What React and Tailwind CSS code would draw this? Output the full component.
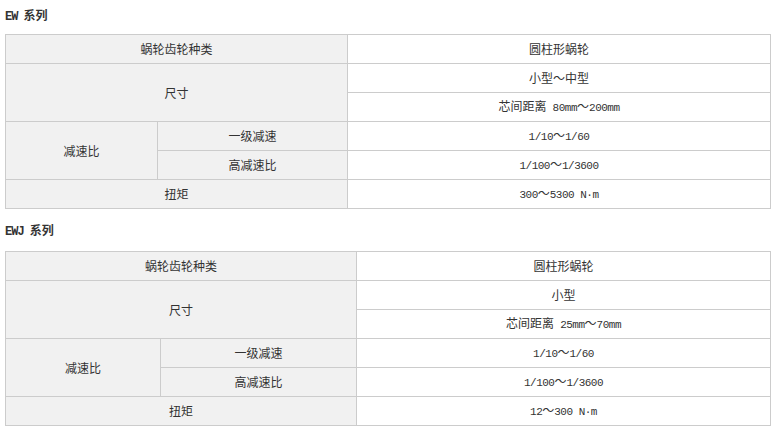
const series = [
	{
		title: 'EW 系列',
		cols: [152, 190, 423],
		size: ['小型～中型', '芯间距离 80mm～200mm'],
		torque: '300～5300 N·m',
		gap: 'mt-[5px]',
	},
	{
		title: 'EWJ 系列',
		cols: [155, 196, 414],
		size: ['小型', '芯间距离 25mm～70mm'],
		torque: '12～300 N·m',
		gap: 'mt-[7px]',
	},
];

// half-width runs are set in a mono face, like the original page's SimSun
const Txt = ({ children, big }) =>
	children.split(/([\x20-\x7e·]+)/).map((part, i) =>
		/^[\x20-\x7e·]+$/.test(part) ? (
			<span
				key={i}
				className={big ? 'text-[12px] tracking-[-1px] whitespace-pre' : 'text-[11px] tracking-[-0.5px] whitespace-pre'}
				style={{ fontFamily: '"Liberation Mono", monospace' }}
			>
				{part}
			</span>
		) : (
			part
		)
	);

const label = 'border border-[#cccccc] bg-[#f1f1f1] text-center align-middle';
const value = 'border border-[#cccccc] bg-white text-center align-middle';

const SpecTable = ({ s }) => (
	<div>
		<h3 className="h-[29px] leading-[29px] text-[12px] font-bold text-[#333333]">
			<Txt big>{s.title}</Txt>
		</h3>
		<table className={`${s.gap} w-[765px] table-fixed border-collapse`}>
			<colgroup>
				{s.cols.map((w, i) => (
					<col key={i} style={{ width: w }} />
				))}
			</colgroup>
			<tbody>
				<tr className="h-[29px]">
					<td colSpan={2} className={label}>蜗轮齿轮种类</td>
					<td className={value}>圆柱形蜗轮</td>
				</tr>
				<tr className="h-[29px]">
					<td colSpan={2} rowSpan={2} className={label}>尺寸</td>
					<td className={value}>{s.size[0]}</td>
				</tr>
				<tr className="h-[29px]">
					<td className={value}>
						<Txt>{s.size[1]}</Txt>
					</td>
				</tr>
				<tr className="h-[29px]">
					<td rowSpan={2} className={label}>减速比</td>
					<td className={label}>一级减速</td>
					<td className={value}>
						<Txt>1/10～1/60</Txt>
					</td>
				</tr>
				<tr className="h-[29px]">
					<td className={label}>高减速比</td>
					<td className={value}>
						<Txt>1/100～1/3600</Txt>
					</td>
				</tr>
				<tr className="h-[29px]">
					<td colSpan={2} className={label}>扭矩</td>
					<td className={value}>
						<Txt>{s.torque}</Txt>
					</td>
				</tr>
			</tbody>
		</table>
	</div>
);

export default function App() {
	return (
		<main
			className="w-[778px] h-[428px] overflow-hidden bg-white px-[5px] text-[12px] text-[#333333]"
			style={{ fontFamily: '"Noto Sans CJK SC", "Liberation Sans", sans-serif' }}
		>
			<SpecTable s={series[0]} />
			<div className="mt-[6px]">
				<SpecTable s={series[1]} />
			</div>
		</main>
	);
}
